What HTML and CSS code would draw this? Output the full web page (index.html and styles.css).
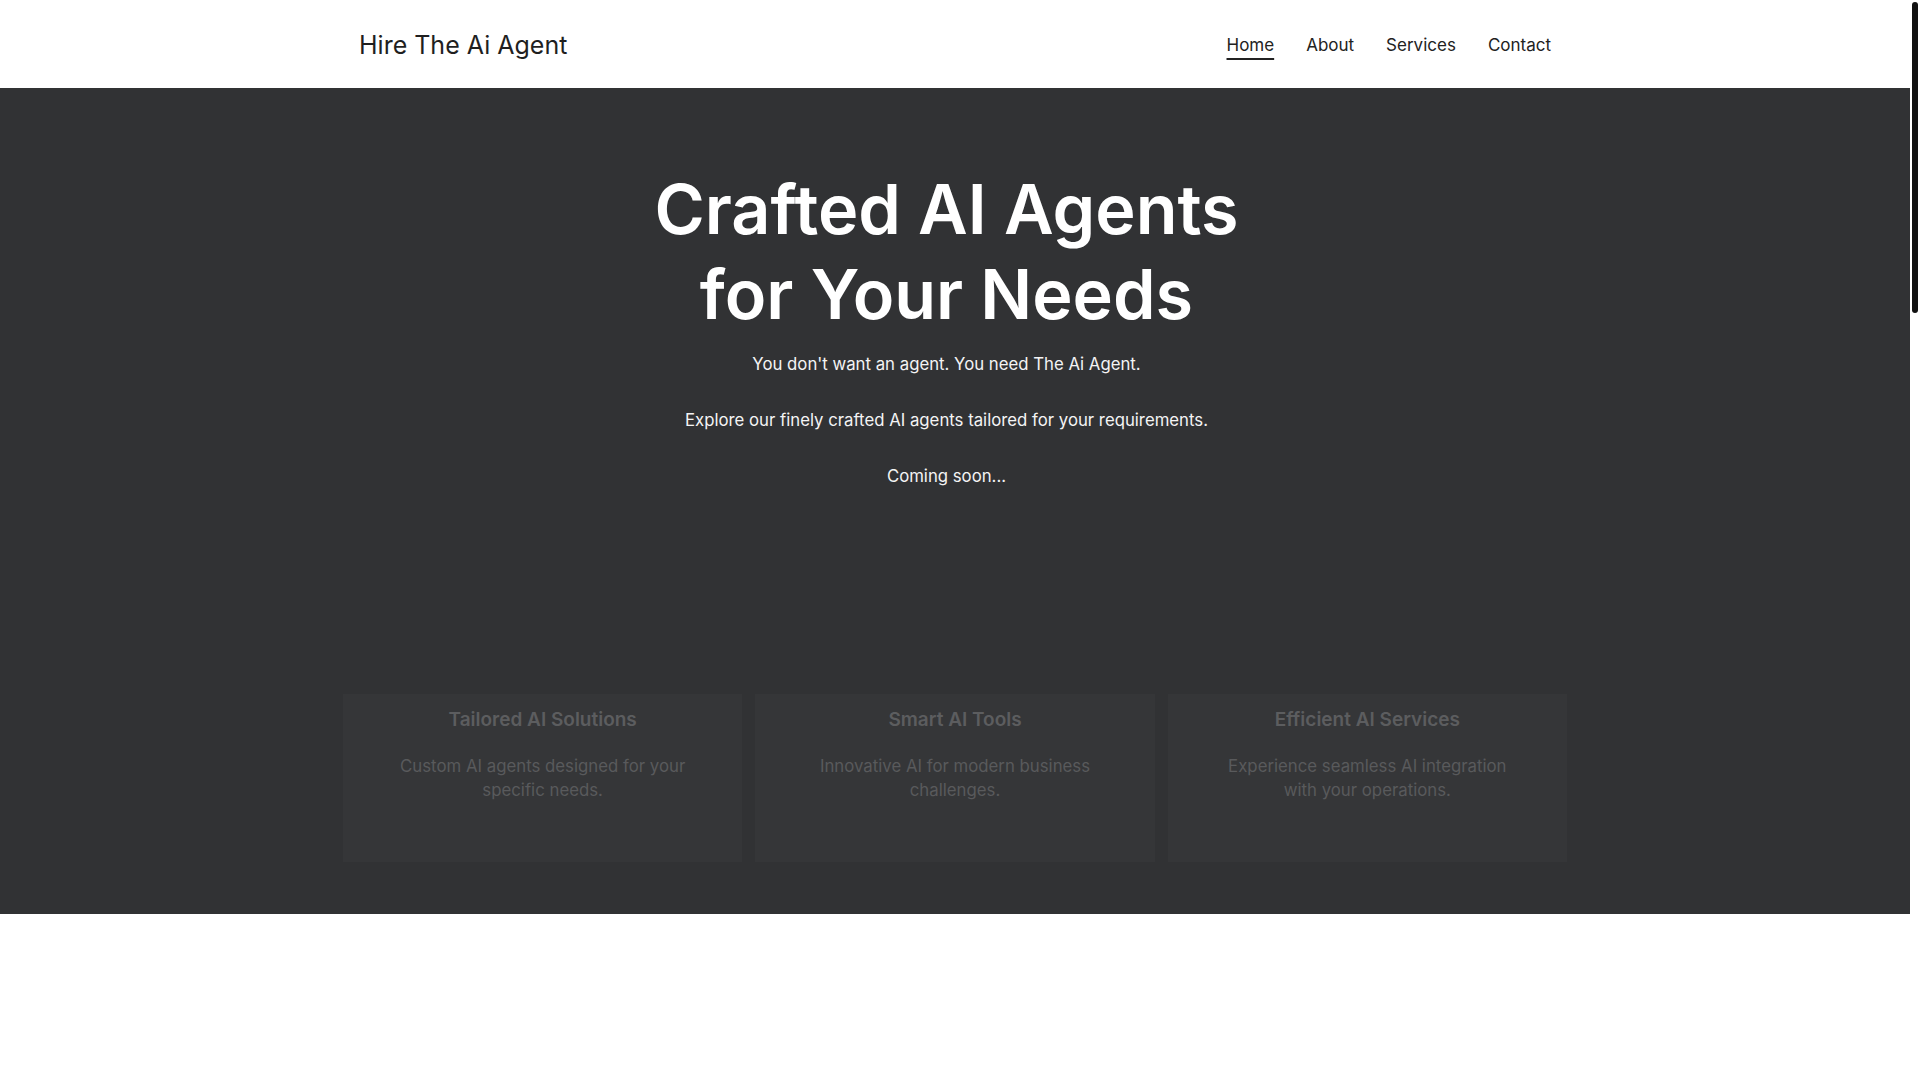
FILE: index.html
```html
<!DOCTYPE html>
<html lang="en">
<head>
<meta charset="utf-8">
<title>Hire The Ai Agent</title>
<link rel="stylesheet" href="styles.css">
</head>
<body>
<header class="site-header">
  <div class="container header-inner">
    <a class="logo" href="#">Hire The Ai Agent</a>
    <nav class="nav">
      <a class="nav-link active" href="#">Home</a>
      <a class="nav-link" href="#">About</a>
      <a class="nav-link" href="#">Services</a>
      <a class="nav-link" href="#">Contact</a>
    </nav>
  </div>
</header>
<section class="hero">
  <div class="container hero-inner">
    <div class="hero-copy">
      <h1 class="hero-title">Crafted AI Agents<br>for Your Needs</h1>
      <p class="hero-text">You don't want an agent. You need The Ai Agent.</p>
      <p class="hero-text">Explore our finely crafted AI agents tailored for your requirements.</p>
      <p class="hero-text">Coming soon...</p>
    </div>
    <div class="cards">
      <div class="card">
        <h3 class="card-title">Tailored AI Solutions</h3>
        <p class="card-text">Custom AI agents designed for your specific needs.</p>
      </div>
      <div class="card">
        <h3 class="card-title">Smart AI Tools</h3>
        <p class="card-text">Innovative AI for modern business challenges.</p>
      </div>
      <div class="card">
        <h3 class="card-title">Efficient AI Services</h3>
        <p class="card-text">Experience seamless AI integration with your operations.</p>
      </div>
    </div>
  </div>
</section>
<section class="below"></section>
<div class="scrollbar"><div class="scrollbar-thumb"></div></div>
</body>
</html>
```
FILE: styles.css
```css
html, body {
  margin: 0;
  padding: 0;
}
body {
  font-family: "Inter", "Noto Sans", "DejaVu Sans", sans-serif;
  color: #222222;
  background: #ffffff;
  padding-right: 10px;
}
a {
  text-decoration: none;
  color: inherit;
}
.container {
  max-width: 1224px;
  margin: 0 auto;
  padding: 0 16px;
  box-sizing: border-box;
}
.site-header {
  height: 88px;
  box-sizing: border-box;
  padding-top: 2px;
  background: #ffffff;
}
.header-inner {
  height: 100%;
  display: flex;
  align-items: center;
  justify-content: space-between;
}
.logo {
  font-size: 25px;
  line-height: 30px;
  color: #1f1f1f;
  font-weight: 400;
}
.nav {
  display: flex;
  gap: 32px;
}
.nav-link {
  font-size: 17px;
  line-height: 22px;
  color: #222222;
}
.nav-link.active {
  text-decoration: underline;
  text-decoration-thickness: 2px;
  text-underline-offset: 7px;
}
.hero {
  background: #313234;
  padding: 79px 0 52px;
}
.hero-inner {
  display: flex;
  flex-direction: column;
  align-items: center;
}
.hero-copy {
  display: flex;
  flex-direction: column;
  align-items: center;
  text-align: center;
  padding-right: 17px;
}
.hero-title {
  margin: 0 0 15px;
  font-size: 68.3px;
  line-height: 85px;
  font-weight: 600;
  color: #ffffff;
}
.hero-text {
  margin: 0 0 32px;
  font-size: 16.75px;
  line-height: 24px;
  color: #f4f4f4;
}
.hero-text:last-of-type {
  margin-bottom: 206px;
}
.cards {
  display: grid;
  grid-template-columns: repeat(3, 1fr);
  gap: 13px;
  margin: 0 -16px;
  width: calc(100% + 32px);
}
.card {
  background: #353638;
  padding: 12px 40px 60px;
  display: flex;
  flex-direction: column;
  align-items: center;
  text-align: center;
}
.card-title {
  margin: 0 0 20px;
  font-size: 19px;
  line-height: 28px;
  font-weight: 600;
  color: #5c5d5f;
}
.card-text {
  margin: 0;
  max-width: 300px;
  font-size: 16.8px;
  line-height: 24px;
  color: #595a5c;
}
.below {
  height: 166px;
  background: #ffffff;
}
.scrollbar {
  position: fixed;
  top: 0;
  right: 0;
  width: 10px;
  height: 100vh;
  background: #ffffff;
}
.scrollbar-thumb {
  width: 6px;
  height: 311px;
  margin: 2px auto 0;
  border-radius: 3px;
  background: #111111;
}
```
